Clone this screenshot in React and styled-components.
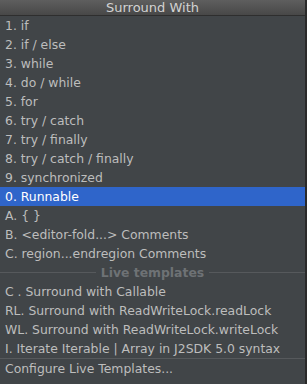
import React from 'react'
import styled, { createGlobalStyle } from 'styled-components'

const Global = createGlobalStyle`
  html, body {
    margin: 0;
    padding: 0;
    background: #2b2b2b;
  }
  body {
    font-family: "DejaVu Sans", "Liberation Sans", sans-serif;
  }
`

const Popup = styled.div`
  width: 305px;
  height: 384px;
  background: #414548;
  border-right: 2px solid #2a2a2a;
  display: flex;
  flex-direction: column;
  overflow: hidden;
`

const Title = styled.div`
  height: 15px;
  line-height: 15px;
  text-align: center;
  font-size: 13px;
  color: #d2d2d2;
  background: linear-gradient(#5e5e5e, #484848);
  border-bottom: 1px solid #2e2e2e;
`

const List = styled.div`
  display: flex;
  flex-direction: column;
`

const Row = styled.div`
  height: 19px;
  line-height: 19px;
  padding-left: 5px;
  font-size: 12.4px;
  white-space: nowrap;
  color: ${p => (p.$selected ? '#ffffff' : '#bdbdbd')};
  background: ${p => (p.$selected ? '#2f65ca' : 'transparent')};
`

const Divider = styled.div`
  height: 19px;
  display: flex;
  align-items: center;
  gap: 5px;
  font-size: 12.4px;
  font-weight: bold;
  color: #6e7275;

  &::before,
  &::after {
    content: '';
    flex: 1;
    height: 1px;
    background: #56595c;
  }
`

const Footer = styled(Row)`
  border-top: 1px solid #56595c;
`

const items = [
  '1. if',
  '2. if / else',
  '3. while',
  '4. do / while',
  '5. for',
  '6. try / catch',
  '7. try / finally',
  '8. try / catch / finally',
  '9. synchronized',
  '0. Runnable',
  'A. { }',
  'B. <editor-fold...> Comments',
  'C. region...endregion Comments',
]

const templates = [
  'C . Surround with Callable',
  'RL. Surround with ReadWriteLock.readLock',
  'WL. Surround with ReadWriteLock.writeLock',
  'I. Iterate Iterable | Array in J2SDK 5.0 syntax',
]

export default function App() {
  return (
    <>
      <Global />
      <Popup>
        <Title>Surround With</Title>
        <List>
          {items.map(t => (
            <Row key={t} $selected={t === '0. Runnable'}>{t}</Row>
          ))}
          <Divider>Live templates</Divider>
          {templates.map(t => (
            <Row key={t}>{t}</Row>
          ))}
          <Footer>Configure Live Templates...</Footer>
        </List>
      </Popup>
    </>
  )
}
